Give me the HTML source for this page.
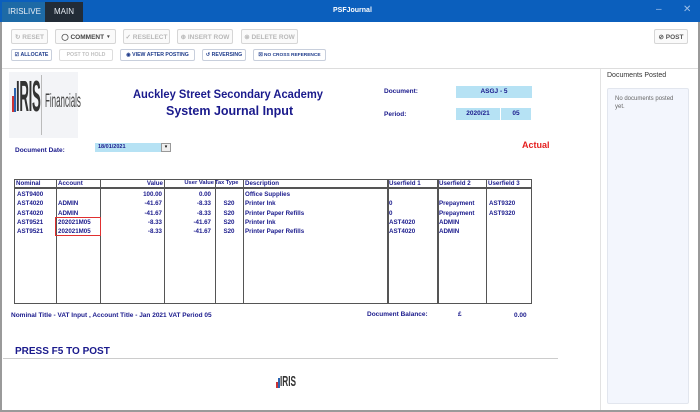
<!DOCTYPE html><html><head><style>
*{margin:0;padding:0;box-sizing:border-box}
body{width:700px;height:412px;position:relative;background:#fff;font-family:"Liberation Sans",sans-serif;overflow:hidden}
.a{position:absolute;white-space:nowrap}
.b{position:absolute;border:1px solid #d6d6d6;border-radius:2px;background:#fafafa;color:#b8b8b8;font-size:6.5px;font-weight:bold;display:flex;align-items:center;justify-content:center;gap:3px;white-space:nowrap}
.b2{color:#1d3a8a;border-color:#c8cfdc;background:#fff;font-size:5.2px}
.n{color:#1a1a8c;font-weight:bold;font-size:6.2px}
.vl{position:absolute;width:1px;background:#555;top:179px;height:124px}
</style></head><body>
<div class="a" style="left:0;top:0;width:700px;height:412px;border:2px solid #9a9a9a"></div>
<div class="a" style="left:0;top:0;width:700px;height:22px;background:#0b5fbd"></div>
<div class="a" style="left:2px;top:2px;width:43px;height:20px;background:#1d6aa6;color:#e8eef5;font-size:8px;padding:5px 0 0 6px">IRISLIVE</div>
<div class="a" style="left:45px;top:2px;width:38px;height:20px;background:#222c37;color:#e8eef5;font-size:8px;padding:5px 0 0 9px">MAIN</div>
<div class="a" style="left:333px;top:7px;color:#fff;font-size:7px;font-weight:bold">PSFJournal</div>
<div class="a" style="left:656px;top:4px;color:#9fc0e8;font-size:10px">–</div>
<div class="a" style="left:683px;top:4px;color:#9fc0e8;font-size:10px">✕</div>
<div class="b" style="left:11px;top:29px;width:37px;height:15px">↻ RESET</div>
<div class="b" style="left:55px;top:29px;width:61px;height:15px;color:#444">◯ COMMENT <span style="font-size:5px">▾</span></div>
<div class="b" style="left:123px;top:29px;width:47px;height:15px">✓ RESELECT</div>
<div class="b" style="left:177px;top:29px;width:56px;height:15px">⊕ INSERT ROW</div>
<div class="b" style="left:241px;top:29px;width:57px;height:15px">⊗ DELETE ROW</div>
<div class="b" style="left:654px;top:29px;width:34px;height:15px;color:#555">⊘ POST</div>
<div class="b b2" style="left:11px;top:49px;width:41px;height:12px">☑ ALLOCATE</div>
<div class="b b2" style="left:59px;top:49px;width:54px;height:12px;color:#c0c0c0;border-color:#ddd">POST TO HOLD</div>
<div class="b b2" style="left:120px;top:49px;width:75px;height:12px">◉ VIEW AFTER POSTING</div>
<div class="b b2" style="left:202px;top:49px;width:44px;height:12px">↺ REVERSING</div>
<div class="b b2" style="left:253px;top:49px;width:73px;height:12px;font-size:4.8px">☒ NO CROSS REFERENCE</div>
<div class="a" style="left:2px;top:68px;width:696px;height:1px;background:#ddd"></div>
<div class="a" style="left:600px;top:69px;width:1px;height:341px;background:#e2e2e2"></div>
<div class="a" style="left:607px;top:72px;font-size:7px;color:#333">Documents Posted</div>
<div class="a" style="left:607px;top:88px;width:82px;height:316px;background:#f3f6fd;border:1px solid #e2e6ee;border-radius:2px;font-size:6px;color:#666;padding:6px 14px 0 7px;white-space:normal;line-height:8px">No documents posted yet.</div>
<div class="a" style="left:9px;top:72px;width:69px;height:66px;background:#f3f4f7"></div>
<div class="a" style="left:12px;top:96px;width:1.5px;height:16px;background:#c33"></div>
<div class="a" style="left:14px;top:88px;width:1.5px;height:24px;background:#2a63b0"></div>
<div class="a" style="left:16px;top:72px;font-size:44px;font-weight:bold;color:#333;transform:scaleX(.3);transform-origin:left;letter-spacing:-1px">IRIS</div>
<div class="a" style="left:41px;top:75px;width:1px;height:60px;background:#bbb"></div>
<div class="a" style="left:45px;top:91px;font-size:19px;color:#444;transform:scaleX(.42);transform-origin:left">Financials</div>
<div class="a" style="left:133px;top:87px;font-size:12px;font-weight:bold;color:#1a1a8c;transform:scaleX(.93);transform-origin:left">Auckley Street Secondary Academy</div>
<div class="a" style="left:166px;top:104px;font-size:12.5px;font-weight:bold;color:#1a1a8c">System Journal Input</div>
<div class="a n" style="left:384px;top:88px;font-size:6.5px">Document:</div>
<div class="a" style="left:456px;top:86px;width:76px;height:12px;background:#b6e2f4;color:#1a1a8c;font-size:6.5px;font-weight:bold;text-align:center;padding-top:2px">ASGJ - 5</div>
<div class="a n" style="left:384px;top:111px;font-size:6.5px">Period:</div>
<div class="a" style="left:456px;top:108px;width:44px;height:12px;background:#b6e2f4;color:#1a1a8c;font-size:6.5px;font-weight:bold;text-align:center;padding-top:2px">2020/21</div>
<div class="a" style="left:501px;top:108px;width:30px;height:12px;background:#b6e2f4;color:#1a1a8c;font-size:6.5px;font-weight:bold;text-align:center;padding-top:2px">05</div>
<div class="a" style="left:522px;top:140px;color:#e52020;font-size:9px;font-weight:bold">Actual</div>
<div class="a n" style="left:15px;top:147px;font-size:6.5px">Document Date:</div>
<div class="a" style="left:95px;top:143px;width:66px;height:9px;background:#b6e2f4;color:#1a1a8c;font-size:5.5px;font-weight:bold;padding:1px 0 0 3px">18/01/2021</div>
<div class="a" style="left:161px;top:143px;width:10px;height:9px;border:1px solid #999;background:#eee;font-size:5px;text-align:center">▾</div>
<div class="a" style="left:14px;top:179px;width:518px;height:125px;border:1px solid #555"></div>
<div class="a" style="left:14px;top:187px;width:518px;height:2px;background:#555"></div>
<div class="vl" style="left:56px"></div><div class="vl" style="left:100px"></div><div class="vl" style="left:164px"></div><div class="vl" style="left:215px"></div><div class="vl" style="left:243px"></div><div class="vl" style="left:387px;width:2px"></div><div class="vl" style="left:437px;width:2px"></div><div class="vl" style="left:486px"></div>
<div class="a n" style="left:16px;top:180px">Nominal</div><div class="a n" style="left:58px;top:180px">Account</div><div class="a n" style="left:100px;top:180px;width:63px;text-align:right">Value</div><div class="a n" style="left:164px;top:180px;width:50px;text-align:right;font-size:5.8px">User Value</div><div class="a n" style="left:215px;top:180px;font-size:5.6px">Tax Type</div><div class="a n" style="left:245px;top:180px">Description</div><div class="a n" style="left:389px;top:180px">Userfield 1</div><div class="a n" style="left:439px;top:180px">Userfield 2</div><div class="a n" style="left:488px;top:180px">Userfield 3</div>
<div class="a n" style="left:17px;top:190px;line-height:9.3px">AST9400<br>AST4020<br>AST4020<br>AST9521<br>AST9521</div>
<div class="a n" style="left:58px;top:190px;line-height:9.3px"><br>ADMIN<br>ADMIN<br>202021M05<br>202021M05</div>
<div class="a n" style="left:100px;top:190px;width:62px;text-align:right;line-height:9.3px">100.00<br>-41.67<br>-41.67<br>-8.33<br>-8.33</div>
<div class="a n" style="left:164px;top:190px;width:47px;text-align:right;line-height:9.3px">0.00<br>-8.33<br>-8.33<br>-41.67<br>-41.67</div>
<div class="a n" style="left:215px;top:190px;width:28px;text-align:center;line-height:9.3px"><br>S20<br>S20<br>S20<br>S20</div>
<div class="a n" style="left:245px;top:190px;line-height:9.3px">Office Supplies<br>Printer Ink<br>Printer Paper Refills<br>Printer Ink<br>Printer Paper Refills</div>
<div class="a n" style="left:389px;top:190px;line-height:9.3px"><br>0<br>0<br>AST4020<br>AST4020</div>
<div class="a n" style="left:439px;top:190px;line-height:9.3px"><br>Prepayment<br>Prepayment<br>ADMIN<br>ADMIN</div>
<div class="a n" style="left:489px;top:190px;line-height:9.3px"><br>AST9320<br>AST9320</div>
<div class="a" style="left:55px;top:217px;width:46px;height:19px;border:1.5px solid #e03030"></div>
<div class="a n" style="left:11px;top:312px;font-size:6.5px">Nominal Title - VAT Input , Account Title - Jan 2021 VAT Period 05</div>
<div class="a n" style="left:367px;top:311px;font-size:6.5px">Document Balance:</div>
<div class="a n" style="left:458px;top:311px;font-size:6.5px">£</div>
<div class="a n" style="left:514px;top:312px;font-size:6.5px">0.00</div>
<div class="a" style="left:15px;top:346px;font-size:10px;font-weight:bold;color:#1a1a8c">PRESS F5 TO POST</div>
<div class="a" style="left:3px;top:358px;width:555px;height:1px;background:#ccc"></div>
<div class="a" style="left:276px;top:382px;width:1.5px;height:6px;background:#c33"></div>
<div class="a" style="left:278px;top:378px;width:1.5px;height:10px;background:#2a63b0"></div>
<div class="a" style="left:280px;top:373px;font-size:15px;font-weight:bold;color:#333;transform:scaleX(.55);transform-origin:left">IRIS</div>
</body></html>
